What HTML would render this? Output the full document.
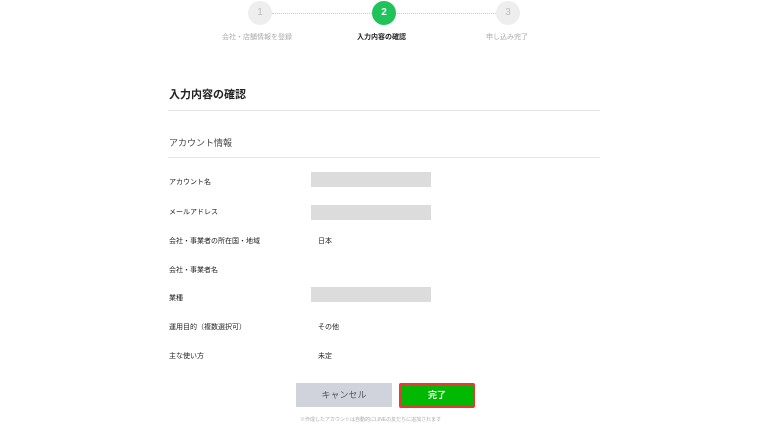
<html><head><style>
body{margin:0;width:768px;height:425px;background:#fff;font-family:"Liberation Sans","Noto Sans CJK JP",sans-serif;position:relative;overflow:hidden}
.a{position:absolute;white-space:nowrap}
.c{position:absolute;width:24px;height:24px;border-radius:50%;background:#eee;color:#bbb;font-size:10px;text-align:center;line-height:24px;top:1px}
.l{font-size:7px;color:#222}
.g{position:absolute;left:311px;width:120px;height:15px;background:#dcdcdc}
</style></head><body>
<div class="a" style="left:272px;top:13px;width:224px;border-top:1px dotted #ccc"></div>
<div class="c" style="left:248px">1</div>
<div class="c" style="left:372px;background:#1fc35a;color:#fff;font-weight:bold">2</div>
<div class="c" style="left:496px">3</div>
<div class="a" style="left:222px;top:32px;font-size:7px;color:#aaa">会社・店舗情報を登録</div>
<div class="a" style="left:357px;top:32px;font-size:7px;color:#222;font-weight:bold">入力内容の確認</div>
<div class="a" style="left:486px;top:32px;font-size:7px;color:#aaa">申し込み完了</div>
<div class="a" style="left:169px;top:86px;font-size:11px;font-weight:bold;color:#222">入力内容の確認</div>
<div class="a" style="left:168px;top:110px;width:432px;border-top:1px solid #e5e5e5"></div>
<div class="a" style="left:169px;top:136px;font-size:9px;color:#444">アカウント情報</div>
<div class="a" style="left:168px;top:157px;width:432px;border-top:1px solid #e5e5e5"></div>
<div class="a l" style="left:169px;top:177px">アカウント名</div><div class="g" style="top:172px"></div>
<div class="a l" style="left:169px;top:207px">メールアドレス</div><div class="g" style="top:205px"></div>
<div class="a l" style="left:169px;top:236px">会社・事業者の所在国・地域</div><div class="a l" style="left:318px;top:236px">日本</div>
<div class="a l" style="left:169px;top:265px">会社・事業者名</div>
<div class="a l" style="left:169px;top:293px">業種</div><div class="g" style="top:287px"></div>
<div class="a l" style="left:169px;top:322px">運用目的（複数選択可）</div><div class="a l" style="left:318px;top:322px">その他</div>
<div class="a l" style="left:169px;top:351px">主な使い方</div><div class="a l" style="left:318px;top:351px">未定</div>
<div class="a" style="left:296px;top:383px;width:96px;height:24px;background:#d0d3db;color:#555;font-size:9px;text-align:center;line-height:24px">キャンセル</div>
<div class="a" style="left:399px;top:383px;width:72px;height:21px;background:#00b900;border:2px solid #e53935;border-radius:2px;color:#fff;font-size:9px;text-align:center;line-height:21px;font-weight:bold">完了</div>
<div class="a" style="left:300px;top:416px;font-size:5px;color:#aaa">※作成したアカウントは自動的にLINEの友だちに追加されます</div>
</body></html>
